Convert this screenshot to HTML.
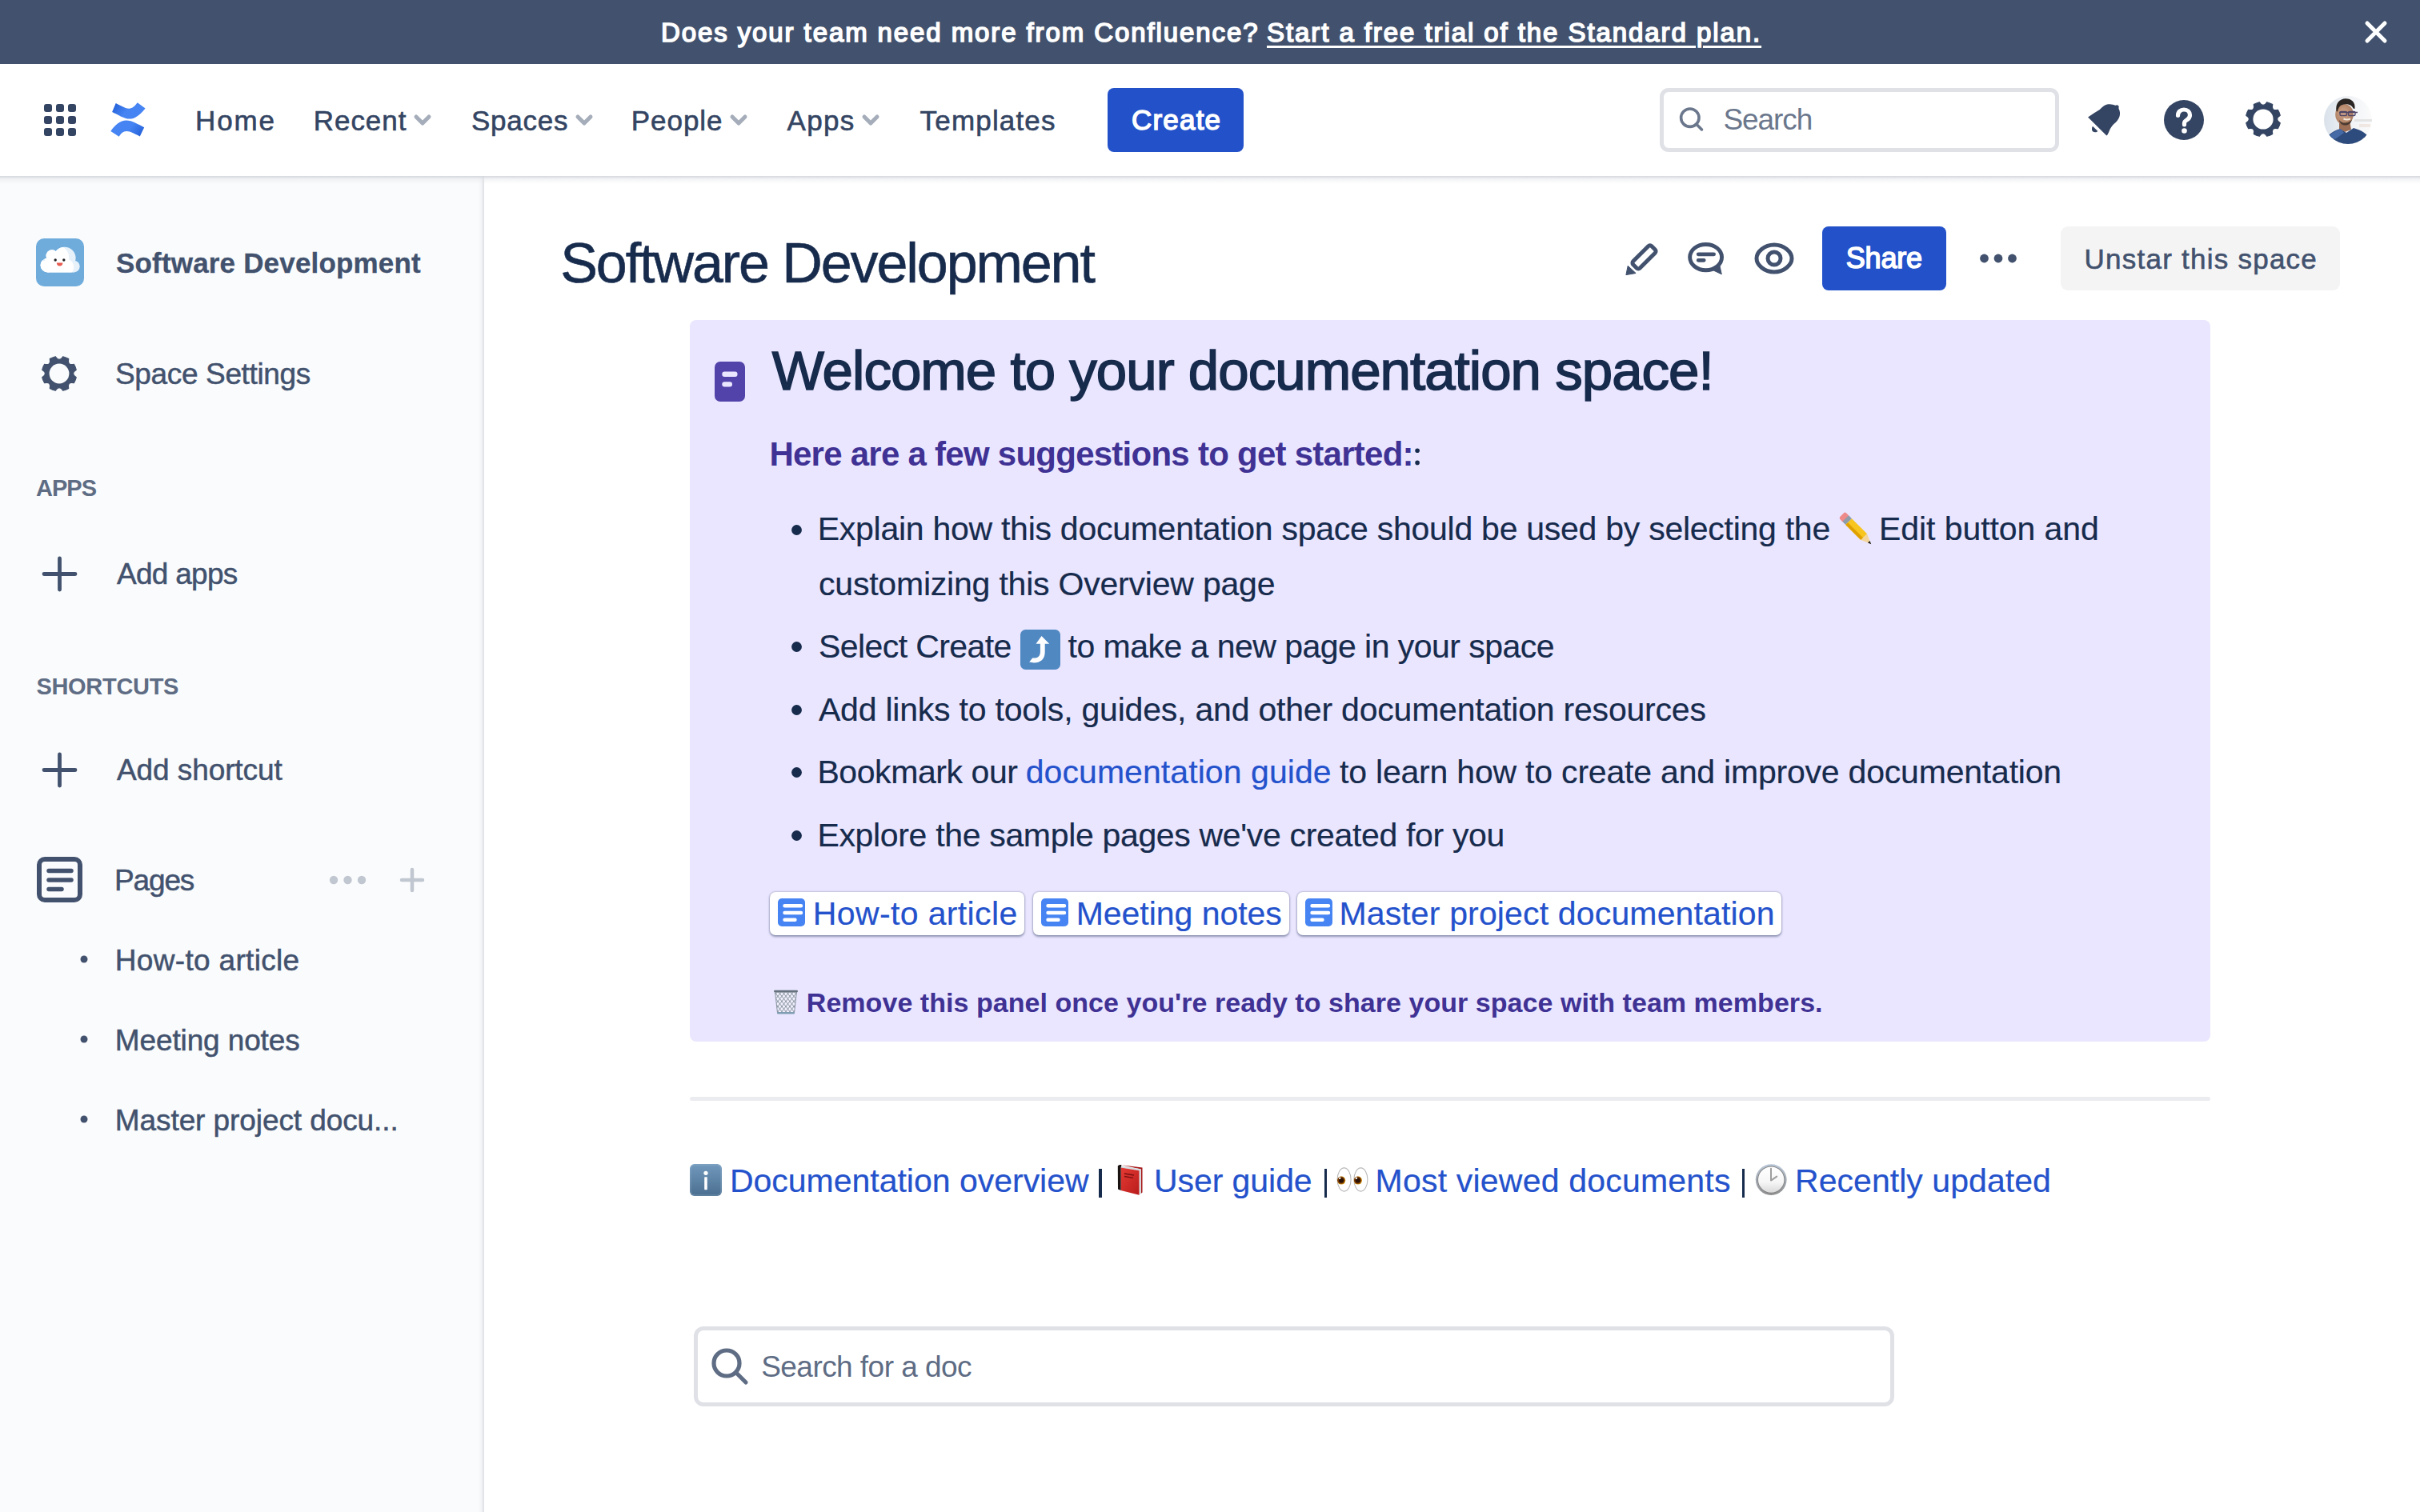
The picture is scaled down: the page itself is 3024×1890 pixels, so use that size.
<!DOCTYPE html>
<html><head><meta charset="utf-8"><title>Software Development - Confluence</title>
<style>
html,body{margin:0;padding:0;width:3024px;height:1890px;overflow:hidden;background:#fff}
body{position:relative;font-family:"Liberation Sans",sans-serif}
.t{position:absolute;white-space:nowrap;line-height:1}
.b{position:absolute}
.i{position:absolute;overflow:visible}
</style></head><body>
<div class="b" style="left:0px;top:0px;width:3024px;height:80px;background:#42526E"></div>
<div class="b" style="left:0px;top:80px;width:3024px;height:140px;background:#fff"></div>
<div class="b" style="left:0px;top:220px;width:603px;height:1670px;background:#FAFBFC;box-shadow:inset -6px 0 6px -6px rgba(9,30,66,0.10)"></div>
<div class="b" style="left:603px;top:220px;width:2px;height:1670px;background:#E3E4E8"></div>
<div class="b" style="left:0px;top:220px;width:3024px;height:10px;background:linear-gradient(#D5D8DE,rgba(223,225,230,0.35) 40%,rgba(255,255,255,0))"></div>
<svg class="i" style="left:2955px;top:26px;" width="28" height="28" viewBox="0 0 28 28"><path d="M3 3L25 25M25 3L3 25" stroke="#fff" stroke-width="5" stroke-linecap="round"/></svg>
<svg class="i" style="left:55px;top:130px;" width="40" height="40" viewBox="0 0 40 40"><rect x="0" y="0" width="10" height="10" rx="3" fill="#344563"/><rect x="0" y="15" width="10" height="10" rx="3" fill="#344563"/><rect x="0" y="30" width="10" height="10" rx="3" fill="#344563"/><rect x="15" y="0" width="10" height="10" rx="3" fill="#344563"/><rect x="15" y="15" width="10" height="10" rx="3" fill="#344563"/><rect x="15" y="30" width="10" height="10" rx="3" fill="#344563"/><rect x="30" y="0" width="10" height="10" rx="3" fill="#344563"/><rect x="30" y="15" width="10" height="10" rx="3" fill="#344563"/><rect x="30" y="30" width="10" height="10" rx="3" fill="#344563"/></svg>
<svg class="i" style="left:130px;top:120px;" width="60" height="60" viewBox="0 0 60 60"><defs>
<linearGradient id="lg1" x1="0" y1="0" x2="1" y2="0.4"><stop offset="0" stop-color="#1D5AD4"/><stop offset="0.55" stop-color="#4684F3"/><stop offset="1" stop-color="#4684F3"/></linearGradient>
<linearGradient id="lg2" x1="1" y1="1" x2="0" y2="0.6"><stop offset="0" stop-color="#1D5AD4"/><stop offset="0.55" stop-color="#4684F3"/><stop offset="1" stop-color="#4684F3"/></linearGradient></defs>
<path d="M14.7 9.1 L10.1 20 C18 23.6 25 28.6 31.7 28.6 C38 28.6 44 25 51.6 15.5 L41.7 8.3 C38.5 12.6 35.5 15.6 31.3 15.7 C26 15.8 19.5 11.3 14.7 9.1Z" fill="url(#lg1)"/>
<path d="M8.3 44 L18.7 50.8 C21 47 23.5 44 28.3 44 C33 44 39 47.6 44.8 50.4 L50.2 39.3 C43 35.8 35 30.6 27.8 30.6 C20 30.6 14 36 8.3 44Z" fill="url(#lg2)"/></svg>
<svg class="i" style="left:517px;top:143px;" width="22" height="16" viewBox="0 0 22 16"><path d="M3 3L11 11L19 3" fill="none" stroke="#A5ADBA" stroke-width="5" stroke-linecap="round" stroke-linejoin="round"/></svg>
<svg class="i" style="left:719px;top:143px;" width="22" height="16" viewBox="0 0 22 16"><path d="M3 3L11 11L19 3" fill="none" stroke="#A5ADBA" stroke-width="5" stroke-linecap="round" stroke-linejoin="round"/></svg>
<svg class="i" style="left:912px;top:143px;" width="22" height="16" viewBox="0 0 22 16"><path d="M3 3L11 11L19 3" fill="none" stroke="#A5ADBA" stroke-width="5" stroke-linecap="round" stroke-linejoin="round"/></svg>
<svg class="i" style="left:1077px;top:143px;" width="22" height="16" viewBox="0 0 22 16"><path d="M3 3L11 11L19 3" fill="none" stroke="#A5ADBA" stroke-width="5" stroke-linecap="round" stroke-linejoin="round"/></svg>
<div class="b" style="left:1384px;top:110px;width:170px;height:80px;background:#2251C9;border-radius:8px"></div>
<div class="b" style="left:2074px;top:110px;width:499px;height:80px;box-sizing:border-box;border:5px solid #DFE1E6;border-radius:11px;background:#fff"></div>
<svg class="i" style="left:2096px;top:132px;" width="36" height="36" viewBox="0 0 36 36"><circle cx="15.8" cy="15.2" r="11.2" fill="none" stroke="#6B778C" stroke-width="3.6"/><path d="M23.8 23.2L30.5 29.9" stroke="#6B778C" stroke-width="3.6" stroke-linecap="round"/></svg>
<svg class="i" style="left:2600px;top:120px;" width="60" height="60" viewBox="0 0 60 60"><path d="M9.1 26.4 C14 23 19 20 23.8 17 C27 14 29 11.5 33 10.5 C37 9.6 40.5 10.5 43.5 11.8 C45 10.5 47.5 11.5 47.7 13.5 C47.6 14.5 47.3 15 47.6 16 C49.2 19 49.5 22.5 48.4 26 C47 30 44 33 41.7 34.8 C39 37.5 37 40.5 35.7 43.7 C34.5 46.3 33.8 48.6 32.3 49.6 Z" fill="#344563"/><path d="M15 37.7 L21.4 43.9 C19.8 45.5 17 45.5 15 44.2 C13.6 42.8 13.6 39.5 15 37.7Z" fill="#344563"/></svg>
<svg class="i" style="left:2704px;top:125px;" width="50" height="50" viewBox="0 0 50 50"><circle cx="25" cy="25" r="25" fill="#344563"/><path d="M17.5 19.2c0-4.3 3.3-7.2 7.5-7.2s7.5 2.9 7.5 6.9c0 3.6-2.4 5.2-4.5 6.5-1.6 1-2.5 1.8-2.5 3.6v1.8" fill="none" stroke="#fff" stroke-width="5.2" stroke-linecap="round"/><circle cx="25.5" cy="38.5" r="3.3" fill="#fff"/></svg>
<svg class="i" style="left:2800px;top:120px;" width="60" height="60" viewBox="0 0 60 60"><path d="M32.72 7.72 A21.8 21.8 0 0 1 39.71 10.61 Q37.76 19.24 46.39 17.29 A21.8 21.8 0 0 1 49.28 24.28 Q41.80 29.00 49.28 33.72 A21.8 21.8 0 0 1 46.39 40.71 Q37.76 38.76 39.71 47.39 A21.8 21.8 0 0 1 32.72 50.28 Q28.00 42.80 23.28 50.28 A21.8 21.8 0 0 1 16.29 47.39 Q18.24 38.76 9.61 40.71 A21.8 21.8 0 0 1 6.72 33.72 Q14.20 29.00 6.72 24.28 A21.8 21.8 0 0 1 9.61 17.29 Q18.24 19.24 16.29 10.61 A21.8 21.8 0 0 1 23.28 7.72 Q28.00 15.20 32.72 7.72 Z" fill="#344563" stroke="#344563" stroke-width="1.2" stroke-linejoin="round"/><circle cx="28" cy="29" r="12.6" fill="#fff"/></svg>
<svg class="i" style="left:2904px;top:120px;" width="60" height="60" viewBox="0 0 60 60"><defs><clipPath id="avc"><circle cx="30" cy="30" r="30"/></clipPath>
<linearGradient id="avbg" x1="0" y1="0" x2="1" y2="0"><stop offset="0" stop-color="#D9E1EA"/><stop offset="0.45" stop-color="#EEF1F5"/><stop offset="1" stop-color="#FBFBFB"/></linearGradient>
<radialGradient id="avf" cx="0.45" cy="0.45" r="0.6"><stop offset="0" stop-color="#D2A88C"/><stop offset="1" stop-color="#A8785C"/></radialGradient></defs>
<g clip-path="url(#avc)"><rect width="60" height="60" fill="url(#avbg)"/>
<rect x="38" y="29" width="22" height="3" fill="#E4E4E4"/>
<rect x="44" y="35" width="14" height="4" fill="#EBDCD4" opacity="0.6"/>
<path d="M19 30 L32 30 L34 42 L26 45 L19 41Z" fill="#9C6E55"/>
<ellipse cx="25.5" cy="23" rx="11.3" ry="13" fill="url(#avf)"/>
<path d="M15.5 19 C14 9 19.5 3.5 27 3.3 C34.5 3.3 39.5 8 38.5 16 L36.5 15.5 C35 11.5 31 10 26.5 10.2 C21.5 10.5 18 13 17 19.5Z" fill="#2A2522"/>
<path d="M19 30 C21 33 24 33.5 26 33.5 C28.5 33.5 32 33 35 29.5 C34 34 31 36.5 26.5 36.5 C22 36.5 19.5 34 19 30Z" fill="#3B2F29" opacity="0.85"/>
<path d="M19 20.5 H42" stroke="#4E4566" stroke-width="1.6"/>
<rect x="20" y="19.5" width="8.5" height="5" rx="1.5" fill="none" stroke="#4E4566" stroke-width="1.4"/>
<rect x="30.5" y="19.5" width="8.5" height="5" rx="1.5" fill="none" stroke="#4E4566" stroke-width="1.4"/>
<path d="M24.5 28.5 Q29 30.5 33 28.3" stroke="#F3E9DA" stroke-width="2" fill="none"/>
<path d="M0 60 C3 50 8 45 20 41 L28 46 L37 40 C47 43 55 47 60 58 L60 60Z" fill="#2E4B7E"/>
<path d="M6 50 C10 46 15 43 21 41 L25 46 L14 54Z" fill="#4B72B0" opacity="0.8"/>
</g></svg>
<svg class="i" style="left:45px;top:298px;" width="60" height="60" viewBox="0 0 60 60"><defs><clipPath id="cw"><circle cx="26" cy="24" r="15.2"/><circle cx="36" cy="36" r="11"/><rect x="0" y="28" width="36" height="20"/></clipPath></defs>
<rect width="60" height="60" rx="10" fill="#6FACDC"/>
<g fill="#E6F1FA"><circle cx="14.5" cy="33.5" r="9"/><circle cx="20" cy="21.8" r="7.5"/><circle cx="35.7" cy="24.6" r="13.9"/><circle cx="47.3" cy="35.1" r="7.4"/><rect x="14.5" y="30" width="33" height="12.5"/></g>
<g fill="#fff" clip-path="url(#cw)"><circle cx="14.5" cy="33.5" r="9"/><circle cx="20" cy="21.8" r="7.5"/><circle cx="35.7" cy="24.6" r="13.9"/><circle cx="47.3" cy="35.1" r="7.4"/><rect x="14.5" y="30" width="33" height="12.5"/></g>
<circle cx="24.2" cy="27" r="1.7" fill="#222"/><circle cx="34.8" cy="27" r="1.7" fill="#222"/>
<path d="M25.8 30.4 H33.4 Q33.2 34.4 29.6 34.4 Q26 34.4 25.8 30.4Z" fill="#E85A50"/></svg>
<svg class="i" style="left:52px;top:445px;" width="44" height="44" viewBox="0 0 44 44"><path d="M26.72 0.72 A21.8 21.8 0 0 1 33.71 3.61 Q31.76 12.24 40.39 10.29 A21.8 21.8 0 0 1 43.28 17.28 Q35.80 22.00 43.28 26.72 A21.8 21.8 0 0 1 40.39 33.71 Q31.76 31.76 33.71 40.39 A21.8 21.8 0 0 1 26.72 43.28 Q22.00 35.80 17.28 43.28 A21.8 21.8 0 0 1 10.29 40.39 Q12.24 31.76 3.61 33.71 A21.8 21.8 0 0 1 0.72 26.72 Q8.20 22.00 0.72 17.28 A21.8 21.8 0 0 1 3.61 10.29 Q12.24 12.24 10.29 3.61 A21.8 21.8 0 0 1 17.28 0.72 Q22.00 8.20 26.72 0.72 Z" fill="#42526E" stroke="#42526E" stroke-width="1.2" stroke-linejoin="round"/><circle cx="22" cy="22" r="12.4" fill="#FAFBFC"/></svg>
<svg class="i" style="left:52px;top:695px;" width="45" height="45" viewBox="0 0 45 45"><path d="M22.5 3V42M3 22.5H42" stroke="#42526E" stroke-width="4.8" stroke-linecap="round"/></svg>
<svg class="i" style="left:52px;top:940px;" width="45" height="45" viewBox="0 0 45 45"><path d="M22.5 3V42M3 22.5H42" stroke="#42526E" stroke-width="4.8" stroke-linecap="round"/></svg>
<svg class="i" style="left:46px;top:1071px;" width="57" height="57" viewBox="0 0 57 57"><rect x="3" y="3" width="51" height="51" rx="7" fill="none" stroke="#42526E" stroke-width="6"/><path d="M15 17.5H43M15 29H43M15 40.5H31" stroke="#42526E" stroke-width="5.5" stroke-linecap="round"/></svg>
<svg class="i" style="left:410px;top:1093px;" width="50" height="14" viewBox="0 0 50 14"><circle cx="7" cy="7" r="5.2" fill="#C1C7D0"/><circle cx="24.5" cy="7" r="5.2" fill="#C1C7D0"/><circle cx="42" cy="7" r="5.2" fill="#C1C7D0"/></svg>
<svg class="i" style="left:499px;top:1084px;" width="32" height="32" viewBox="0 0 32 32"><path d="M16 3V29M3 16H29" stroke="#C1C7D0" stroke-width="4.5" stroke-linecap="round"/></svg>
<svg class="i" style="left:100px;top:1194px;" width="10" height="10" viewBox="0 0 10 10"><circle cx="5" cy="5" r="4.5" fill="#42526E"/></svg>
<svg class="i" style="left:100px;top:1294px;" width="10" height="10" viewBox="0 0 10 10"><circle cx="5" cy="5" r="4.5" fill="#42526E"/></svg>
<svg class="i" style="left:100px;top:1394px;" width="10" height="10" viewBox="0 0 10 10"><circle cx="5" cy="5" r="4.5" fill="#42526E"/></svg>
<svg class="i" style="left:2025px;top:295px;" width="55" height="55" viewBox="0 0 55 55"><rect x="13.15" y="20.35" width="32.7" height="12" rx="3" transform="rotate(-45 29.5 26.35)" fill="none" stroke="#42526E" stroke-width="5"/><path d="M6.9 48.6 L9.2 37.3 L19.1 46.5 Z" fill="#42526E" stroke="#42526E" stroke-width="1" stroke-linejoin="round"/></svg>
<svg class="i" style="left:2105px;top:300px;" width="50" height="46" viewBox="0 0 50 46"><ellipse cx="26.6" cy="21.6" rx="19.95" ry="16.15" fill="none" stroke="#42526E" stroke-width="4.9"/><path d="M33 36.5 L43.5 30.5 L46.3 42.8 Z" fill="#42526E" stroke="#42526E" stroke-width="1" stroke-linejoin="round"/><path d="M17.2 17.8H36.6M17.2 25.3H24.2" stroke="#42526E" stroke-width="4.8" stroke-linecap="round"/></svg>
<svg class="i" style="left:2192px;top:303px;" width="50" height="40" viewBox="0 0 50 40"><path d="M25 3C12.5 3 3 12 3 20s9.5 17 22 17 22-9 22-17S37.5 3 25 3Z" fill="none" stroke="#42526E" stroke-width="5"/><circle cx="25" cy="20" r="8" fill="none" stroke="#42526E" stroke-width="5"/></svg>
<div class="b" style="left:2277px;top:283px;width:155px;height:80px;background:#2251C9;border-radius:8px"></div>
<svg class="i" style="left:2472px;top:316px;" width="50" height="14" viewBox="0 0 50 14"><circle cx="7.5" cy="7" r="5.4" fill="#42526E"/><circle cx="25" cy="7" r="5.4" fill="#42526E"/><circle cx="42.5" cy="7" r="5.4" fill="#42526E"/></svg>
<div class="b" style="left:2575px;top:283px;width:349px;height:80px;background:#F4F4F5;border-radius:9px"></div>
<div class="b" style="left:862px;top:400px;width:1900px;height:902px;background:#EAE6FF;border-radius:8px"></div>
<svg class="i" style="left:1766px;top:558px;" width="10" height="26" viewBox="0 0 10 26"><circle cx="5.1" cy="5.2" r="2.8" fill="#172B4D"/><circle cx="5.1" cy="20.4" r="2.8" fill="#172B4D"/></svg>
<svg class="i" style="left:893px;top:452px;" width="38" height="50" viewBox="0 0 38 50"><rect width="38" height="50" rx="7" fill="#5243AA"/><rect x="9.3" y="12.5" width="19.2" height="6.5" rx="3" fill="#EAE6FF"/><rect x="9.3" y="25.3" width="12.7" height="6.3" rx="3" fill="#EAE6FF"/></svg>
<svg class="i" style="left:989px;top:656px;" width="13" height="13" viewBox="0 0 13 13"><circle cx="6.5" cy="6.5" r="6.4" fill="#172B4D"/></svg>
<svg class="i" style="left:989px;top:802px;" width="13" height="13" viewBox="0 0 13 13"><circle cx="6.5" cy="6.5" r="6.4" fill="#172B4D"/></svg>
<svg class="i" style="left:989px;top:881px;" width="13" height="13" viewBox="0 0 13 13"><circle cx="6.5" cy="6.5" r="6.4" fill="#172B4D"/></svg>
<svg class="i" style="left:989px;top:959px;" width="13" height="13" viewBox="0 0 13 13"><circle cx="6.5" cy="6.5" r="6.4" fill="#172B4D"/></svg>
<svg class="i" style="left:989px;top:1038px;" width="13" height="13" viewBox="0 0 13 13"><circle cx="6.5" cy="6.5" r="6.4" fill="#172B4D"/></svg>
<svg class="i" style="left:2300.5px;top:642.5px;" width="38" height="38" viewBox="0 0 38 38"><g transform="translate(19 19) rotate(45)"><rect x="-26" y="-5.5" width="8" height="11" rx="2.5" fill="#EE8A8A"/><rect x="-19.5" y="-5.5" width="5.5" height="11" fill="#8F9CA9"/><rect x="-14" y="-5.5" width="27" height="11" fill="#F7C51E"/><rect x="-14" y="1.5" width="27" height="4" fill="#DFA000"/><path d="M13 -5.5 L25.5 0 L13 5.5Z" fill="#F3D59B"/><path d="M21.5 -1.8 L25.8 0 L21.5 1.8Z" fill="#222"/></g></svg>
<svg class="i" style="left:1275px;top:787px;" width="50" height="50" viewBox="0 0 50 50"><rect width="50" height="50" rx="6.5" fill="#5088C2"/><path d="M26.5 8 L36.2 17.7 L30.7 17.7 L30.7 28 C30.7 37 25 41.5 17 41.5 L11.2 40.5 L15.2 35.5 L17.5 35.6 C22 35.6 24.9 32.5 24.9 28 L24.9 17.7 L19.5 17.7Z" fill="#fff"/></svg>
<div class="b" style="left:962px;top:1115px;width:318px;height:54px;background:#fff;border-radius:7px;box-shadow:0 1.5px 3px rgba(9,30,66,0.38),0 0 2.5px rgba(9,30,66,0.3)"></div>
<svg class="i" style="left:972px;top:1123px;" width="34" height="35" viewBox="0 0 34 35"><rect width="34" height="35" rx="5" fill="#4684F3"/><path d="M8.5 9.2H29M8.5 18H29M8.5 26.7H21.5" stroke="#fff" stroke-width="4.4" stroke-linecap="round"/></svg>
<div class="b" style="left:1291px;top:1115px;width:320px;height:54px;background:#fff;border-radius:7px;box-shadow:0 1.5px 3px rgba(9,30,66,0.38),0 0 2.5px rgba(9,30,66,0.3)"></div>
<svg class="i" style="left:1301px;top:1123px;" width="34" height="35" viewBox="0 0 34 35"><rect width="34" height="35" rx="5" fill="#4684F3"/><path d="M8.5 9.2H29M8.5 18H29M8.5 26.7H21.5" stroke="#fff" stroke-width="4.4" stroke-linecap="round"/></svg>
<div class="b" style="left:1620.5px;top:1115px;width:605.1px;height:54px;background:#fff;border-radius:7px;box-shadow:0 1.5px 3px rgba(9,30,66,0.38),0 0 2.5px rgba(9,30,66,0.3)"></div>
<svg class="i" style="left:1630.5px;top:1123px;" width="34" height="35" viewBox="0 0 34 35"><rect width="34" height="35" rx="5" fill="#4684F3"/><path d="M8.5 9.2H29M8.5 18H29M8.5 26.7H21.5" stroke="#fff" stroke-width="4.4" stroke-linecap="round"/></svg>
<svg class="i" style="left:966px;top:1236px;" width="32" height="32" viewBox="0 0 32 32"><defs><clipPath id="tcl"><path d="M2.5 3.5 L29.5 3.5 L26.5 30 L5.5 30Z"/></clipPath></defs><path d="M2.5 3.5 L29.5 3.5 L26.5 30 L5.5 30Z" fill="#F4F6FA" opacity="0.5"/><g clip-path="url(#tcl)" stroke="#72808C" stroke-width="0.8" fill="none"><path d="M-24 3 L-2 31 M-24 3 L-46 31" /><path d="M-19 3 L3 31 M-19 3 L-41 31" /><path d="M-14 3 L8 31 M-14 3 L-36 31" /><path d="M-9 3 L13 31 M-9 3 L-31 31" /><path d="M-4 3 L18 31 M-4 3 L-26 31" /><path d="M1 3 L23 31 M1 3 L-21 31" /><path d="M6 3 L28 31 M6 3 L-16 31" /><path d="M11 3 L33 31 M11 3 L-11 31" /><path d="M16 3 L38 31 M16 3 L-6 31" /><path d="M21 3 L43 31 M21 3 L-1 31" /><path d="M26 3 L48 31 M26 3 L4 31" /><path d="M31 3 L53 31 M31 3 L9 31" /><path d="M36 3 L58 31 M36 3 L14 31" /><path d="M41 3 L63 31 M41 3 L19 31" /><path d="M46 3 L68 31 M46 3 L24 31" /><path d="M51 3 L73 31 M51 3 L29 31" /><path d="M56 3 L78 31 M56 3 L34 31" /></g><path d="M2.5 3.5 L5.5 30 M29.5 3.5 L26.5 30" stroke="#8995A0" stroke-width="1"/><rect x="1" y="1.8" width="30" height="2.6" rx="1.3" fill="#66727D"/><rect x="5" y="29" width="22" height="2.6" rx="1.3" fill="#7F9DB3"/></svg>
<div class="b" style="left:862px;top:1371px;width:1900px;height:5px;background:#EBECF0;border-radius:3px"></div>
<svg class="i" style="left:862px;top:1455px;" width="40" height="40" viewBox="0 0 40 40"><defs><linearGradient id="ig" x1="0" y1="0" x2="0" y2="1"><stop offset="0" stop-color="#7199BD"/><stop offset="1" stop-color="#4A6E8F"/></linearGradient></defs><rect width="40" height="40" rx="6" fill="url(#ig)"/><rect x="1" y="1" width="38" height="38" rx="5.2" fill="none" stroke="#9FBBD3" stroke-opacity="0.45" stroke-width="1"/><circle cx="20" cy="11.3" r="2.6" fill="#fff"/><rect x="18.2" y="16.2" width="3.6" height="16" rx="0.8" fill="#fff"/></svg>
<svg class="i" style="left:1396px;top:1455px;" width="32" height="40" viewBox="0 0 32 40"><defs><linearGradient id="bkg" x1="0" y1="0" x2="1" y2="1"><stop offset="0" stop-color="#E53A33"/><stop offset="1" stop-color="#B81C1C"/></linearGradient></defs><path d="M5.5 1.2 L31.5 4.6 L31.5 35.5 L29.7 37 L29.7 6.6 Z" fill="#A81818"/><path d="M5 2.6 L29.7 6.3 L29.7 37 L27.5 38.7 L27.5 8.2 L4.6 4.5Z" fill="#D5DCE0"/><path d="M4.6 4.5 L27.5 8.2 L27.5 38.7 L4.6 32.9Z" fill="url(#bkg)"/><path d="M0.8 2.5 Q1.5 0.8 4.5 1 L5.5 1.2 L4.6 4.5 L4.6 32.9 L1 31.5Z" fill="#1B1212"/><path d="M9 12 L21 14 M9 15.5 L20 17.3" stroke="#7A1010" stroke-width="1.3"/></svg>
<div class="b" style="left:1373px;top:1461px;width:3.5px;height:36px;background:#172B4D"></div>
<div class="b" style="left:1654.5px;top:1461px;width:3.5px;height:36px;background:#172B4D"></div>
<div class="b" style="left:2176.5px;top:1461px;width:3.5px;height:36px;background:#172B4D"></div>
<svg class="i" style="left:1669px;top:1459px;" width="42" height="31" viewBox="0 0 42 31"><ellipse cx="10.6" cy="15.5" rx="8.5" ry="14.6" fill="#FFF" stroke="#B8B8B8" stroke-width="1.1"/><ellipse cx="31.4" cy="15.5" rx="8.5" ry="14.6" fill="#FFF" stroke="#B8B8B8" stroke-width="1.1"/><circle cx="7.2" cy="16.6" r="5" fill="#C88A00"/><circle cx="27.9" cy="16.6" r="5" fill="#C88A00"/><circle cx="6.8" cy="16.2" r="4.5" fill="#7A3A08"/><circle cx="27.5" cy="16.2" r="4.5" fill="#7A3A08"/><circle cx="7" cy="16.5" r="3" fill="#2A1204"/><circle cx="27.7" cy="16.5" r="3" fill="#2A1204"/><circle cx="5.2" cy="13.8" r="1.2" fill="#fff"/><circle cx="25.9" cy="13.8" r="1.2" fill="#fff"/></svg>
<svg class="i" style="left:2192px;top:1455px;" width="42" height="40" viewBox="0 0 42 40"><defs><linearGradient id="clg" x1="0" y1="0" x2="0" y2="1"><stop offset="0" stop-color="#FFFFFF"/><stop offset="0.6" stop-color="#F6F6F6"/><stop offset="1" stop-color="#D9D9D9"/></linearGradient><linearGradient id="clb" x1="0" y1="0" x2="0" y2="1"><stop offset="0" stop-color="#B9C7D8"/><stop offset="1" stop-color="#8E8E8E"/></linearGradient></defs><circle cx="21.2" cy="19.6" r="19.4" fill="url(#clb)"/><circle cx="21.2" cy="19.6" r="17" fill="#7C7C7C"/><circle cx="21.2" cy="19.6" r="16.2" fill="url(#clg)"/><path d="M21 5.8 V20.6 L28.2 15.6" fill="none" stroke="#9E9E9E" stroke-width="2" stroke-linecap="round" stroke-linejoin="round"/></svg>
<div class="b" style="left:867px;top:1658px;width:1500px;height:100px;box-sizing:border-box;border:5px solid #DFE1E6;border-radius:12px;background:#fff"></div>
<svg class="i" style="left:886px;top:1682px;" width="52" height="52" viewBox="0 0 52 52"><circle cx="22" cy="22" r="16" fill="none" stroke="#5E6C84" stroke-width="5.2"/><path d="M33.5 33.5L46 46" stroke="#5E6C84" stroke-width="5.2" stroke-linecap="round"/></svg>
<div class="t" style="left:826.0px;top:24.4px;font-size:33px;font-weight:400;color:#fff;letter-spacing:1.900px;-webkit-text-stroke:1.6px #fff;">Does your team need more from Confluence?</div>
<div class="t" style="left:1583.0px;top:24.4px;font-size:33px;font-weight:400;color:#fff;letter-spacing:1.923px;-webkit-text-stroke:1.6px #fff;text-decoration:underline;text-decoration-thickness:3px;text-underline-offset:5px;">Start a free trial of the Standard plan.</div>
<div class="t" style="left:244.0px;top:132.5px;font-size:35px;font-weight:400;color:#344563;letter-spacing:1.867px;-webkit-text-stroke:0.6px #344563;">Home</div>
<div class="t" style="left:391.8px;top:132.5px;font-size:35px;font-weight:400;color:#344563;letter-spacing:0.940px;-webkit-text-stroke:0.6px #344563;">Recent</div>
<div class="t" style="left:589.0px;top:132.5px;font-size:35px;font-weight:400;color:#344563;letter-spacing:0.740px;-webkit-text-stroke:0.6px #344563;">Spaces</div>
<div class="t" style="left:788.8px;top:132.5px;font-size:35px;font-weight:400;color:#344563;letter-spacing:0.940px;-webkit-text-stroke:0.6px #344563;">People</div>
<div class="t" style="left:983.6px;top:132.5px;font-size:35px;font-weight:400;color:#344563;letter-spacing:1.267px;-webkit-text-stroke:0.6px #344563;">Apps</div>
<div class="t" style="left:1149.6px;top:132.5px;font-size:35px;font-weight:400;color:#344563;letter-spacing:1.175px;-webkit-text-stroke:0.6px #344563;">Templates</div>
<div class="t" style="left:1414.0px;top:131.8px;font-size:35px;font-weight:400;color:#fff;letter-spacing:1.200px;-webkit-text-stroke:1.5px #fff;">Create</div>
<div class="t" style="left:2153.5px;top:131.0px;font-size:37px;font-weight:400;color:#6B778C;letter-spacing:-1.100px;">Search</div>
<div class="t" style="left:145.0px;top:311.0px;font-size:35px;font-weight:700;color:#42526E;letter-spacing:0.179px;-webkit-text-stroke:0.3px #42526E;">Software Development</div>
<div class="t" style="left:144.0px;top:449.4px;font-size:37px;font-weight:400;color:#42526E;letter-spacing:-0.354px;-webkit-text-stroke:0.5px #42526E;">Space Settings</div>
<div class="t" style="left:45.0px;top:596.0px;font-size:29px;font-weight:700;color:#5E6C84;letter-spacing:-1.000px;">APPS</div>
<div class="t" style="left:146.0px;top:699.0px;font-size:37px;font-weight:400;color:#42526E;letter-spacing:-0.714px;-webkit-text-stroke:0.5px #42526E;">Add apps</div>
<div class="t" style="left:45.4px;top:844.3px;font-size:29px;font-weight:700;color:#5E6C84;letter-spacing:-0.300px;">SHORTCUTS</div>
<div class="t" style="left:146.0px;top:944.2px;font-size:37px;font-weight:400;color:#42526E;letter-spacing:-0.091px;-webkit-text-stroke:0.5px #42526E;">Add shortcut</div>
<div class="t" style="left:143.0px;top:1082.0px;font-size:37px;font-weight:400;color:#42526E;letter-spacing:-1.150px;-webkit-text-stroke:0.5px #42526E;">Pages</div>
<div class="t" style="left:143.8px;top:1182.0px;font-size:37px;font-weight:400;color:#42526E;letter-spacing:0.323px;-webkit-text-stroke:0.5px #42526E;">How-to article</div>
<div class="t" style="left:143.8px;top:1281.7px;font-size:37px;font-weight:400;color:#42526E;letter-spacing:-0.125px;-webkit-text-stroke:0.5px #42526E;">Meeting notes</div>
<div class="t" style="left:143.8px;top:1382.4px;font-size:37px;font-weight:400;color:#42526E;letter-spacing:-0.086px;-webkit-text-stroke:0.5px #42526E;">Master project docu...</div>
<div class="t" style="left:700.2px;top:294.3px;font-size:70px;font-weight:400;color:#172B4D;letter-spacing:-2.074px;-webkit-text-stroke:0.6px #172B4D;">Software Development</div>
<div class="t" style="left:2306.8px;top:305.4px;font-size:36px;font-weight:400;color:#fff;letter-spacing:-0.200px;-webkit-text-stroke:1.5px #fff;">Share</div>
<div class="t" style="left:2604.5px;top:306.2px;font-size:35px;font-weight:400;color:#42526E;letter-spacing:1.244px;-webkit-text-stroke:0.6px #42526E;">Unstar this space</div>
<div class="t" style="left:964.7px;top:429.4px;font-size:69px;font-weight:400;color:#172B4D;letter-spacing:-0.963px;-webkit-text-stroke:1.6px #172B4D;">Welcome to your documentation space!</div>
<div class="t" style="left:961.4px;top:546.5px;font-size:42px;font-weight:700;color:#403294;letter-spacing:-0.741px;">Here are a few suggestions to get started:</div>
<div class="t" style="left:1021.7px;top:641.3px;font-size:41px;font-weight:400;color:#172B4D;letter-spacing:-0.264px;-webkit-text-stroke:0.2px #172B4D;">Explain how this documentation space should be used by selecting the</div>
<div class="t" style="left:2348.0px;top:641.3px;font-size:41px;font-weight:400;color:#172B4D;letter-spacing:-0.071px;-webkit-text-stroke:0.2px #172B4D;">Edit button and</div>
<div class="t" style="left:1023.0px;top:709.6px;font-size:41px;font-weight:400;color:#172B4D;letter-spacing:-0.207px;-webkit-text-stroke:0.2px #172B4D;">customizing this Overview page</div>
<div class="t" style="left:1023.0px;top:787.8px;font-size:41px;font-weight:400;color:#172B4D;letter-spacing:-0.583px;-webkit-text-stroke:0.2px #172B4D;">Select Create</div>
<div class="t" style="left:1334.6px;top:787.8px;font-size:41px;font-weight:400;color:#172B4D;letter-spacing:-0.535px;-webkit-text-stroke:0.2px #172B4D;">to make a new page in your space</div>
<div class="t" style="left:1022.9px;top:866.6px;font-size:41px;font-weight:400;color:#172B4D;letter-spacing:-0.205px;-webkit-text-stroke:0.2px #172B4D;">Add links to tools, guides, and other documentation resources</div>
<div class="t" style="left:1021.4px;top:945.2px;font-size:41px;font-weight:400;color:#172B4D;letter-spacing:-0.418px;-webkit-text-stroke:0.2px #172B4D;">Bookmark our</div>
<div class="t" style="left:1281.7px;top:945.2px;font-size:41px;font-weight:400;color:#2452CC;letter-spacing:0.072px;-webkit-text-stroke:0.2px #2452CC;">documentation guide</div>
<div class="t" style="left:1674.0px;top:945.2px;font-size:41px;font-weight:400;color:#172B4D;letter-spacing:-0.202px;-webkit-text-stroke:0.2px #172B4D;">to learn how to create and improve documentation</div>
<div class="t" style="left:1021.4px;top:1023.8px;font-size:41px;font-weight:400;color:#172B4D;letter-spacing:-0.331px;-webkit-text-stroke:0.2px #172B4D;">Explore the sample pages we've created for you</div>
<div class="t" style="left:1015.8px;top:1121.8px;font-size:41px;font-weight:400;color:#2452CC;letter-spacing:0.369px;-webkit-text-stroke:0.2px #2452CC;">How-to article</div>
<div class="t" style="left:1344.7px;top:1121.8px;font-size:41px;font-weight:400;color:#2452CC;letter-spacing:-0.033px;-webkit-text-stroke:0.2px #2452CC;">Meeting notes</div>
<div class="t" style="left:1673.4px;top:1121.8px;font-size:41px;font-weight:400;color:#2452CC;letter-spacing:0.152px;-webkit-text-stroke:0.2px #2452CC;">Master project documentation</div>
<div class="t" style="left:1007.8px;top:1235.6px;font-size:34px;font-weight:700;color:#403294;letter-spacing:0.044px;">Remove this panel once you're ready to share your space with team members.</div>
<div class="t" style="left:911.9px;top:1455.8px;font-size:41px;font-weight:400;color:#2452CC;letter-spacing:-0.010px;-webkit-text-stroke:0.2px #2452CC;">Documentation overview</div>
<div class="t" style="left:1442.0px;top:1455.8px;font-size:41px;font-weight:400;color:#2452CC;letter-spacing:-0.067px;-webkit-text-stroke:0.2px #2452CC;">User guide</div>
<div class="t" style="left:1718.6px;top:1455.8px;font-size:41px;font-weight:400;color:#2452CC;letter-spacing:0.200px;-webkit-text-stroke:0.2px #2452CC;">Most viewed documents</div>
<div class="t" style="left:2243.0px;top:1455.8px;font-size:41px;font-weight:400;color:#2452CC;letter-spacing:0.047px;-webkit-text-stroke:0.2px #2452CC;">Recently updated</div>
<div class="t" style="left:951.2px;top:1690.0px;font-size:37px;font-weight:400;color:#5E6C84;letter-spacing:-0.547px;">Search for a doc</div>
</body></html>
